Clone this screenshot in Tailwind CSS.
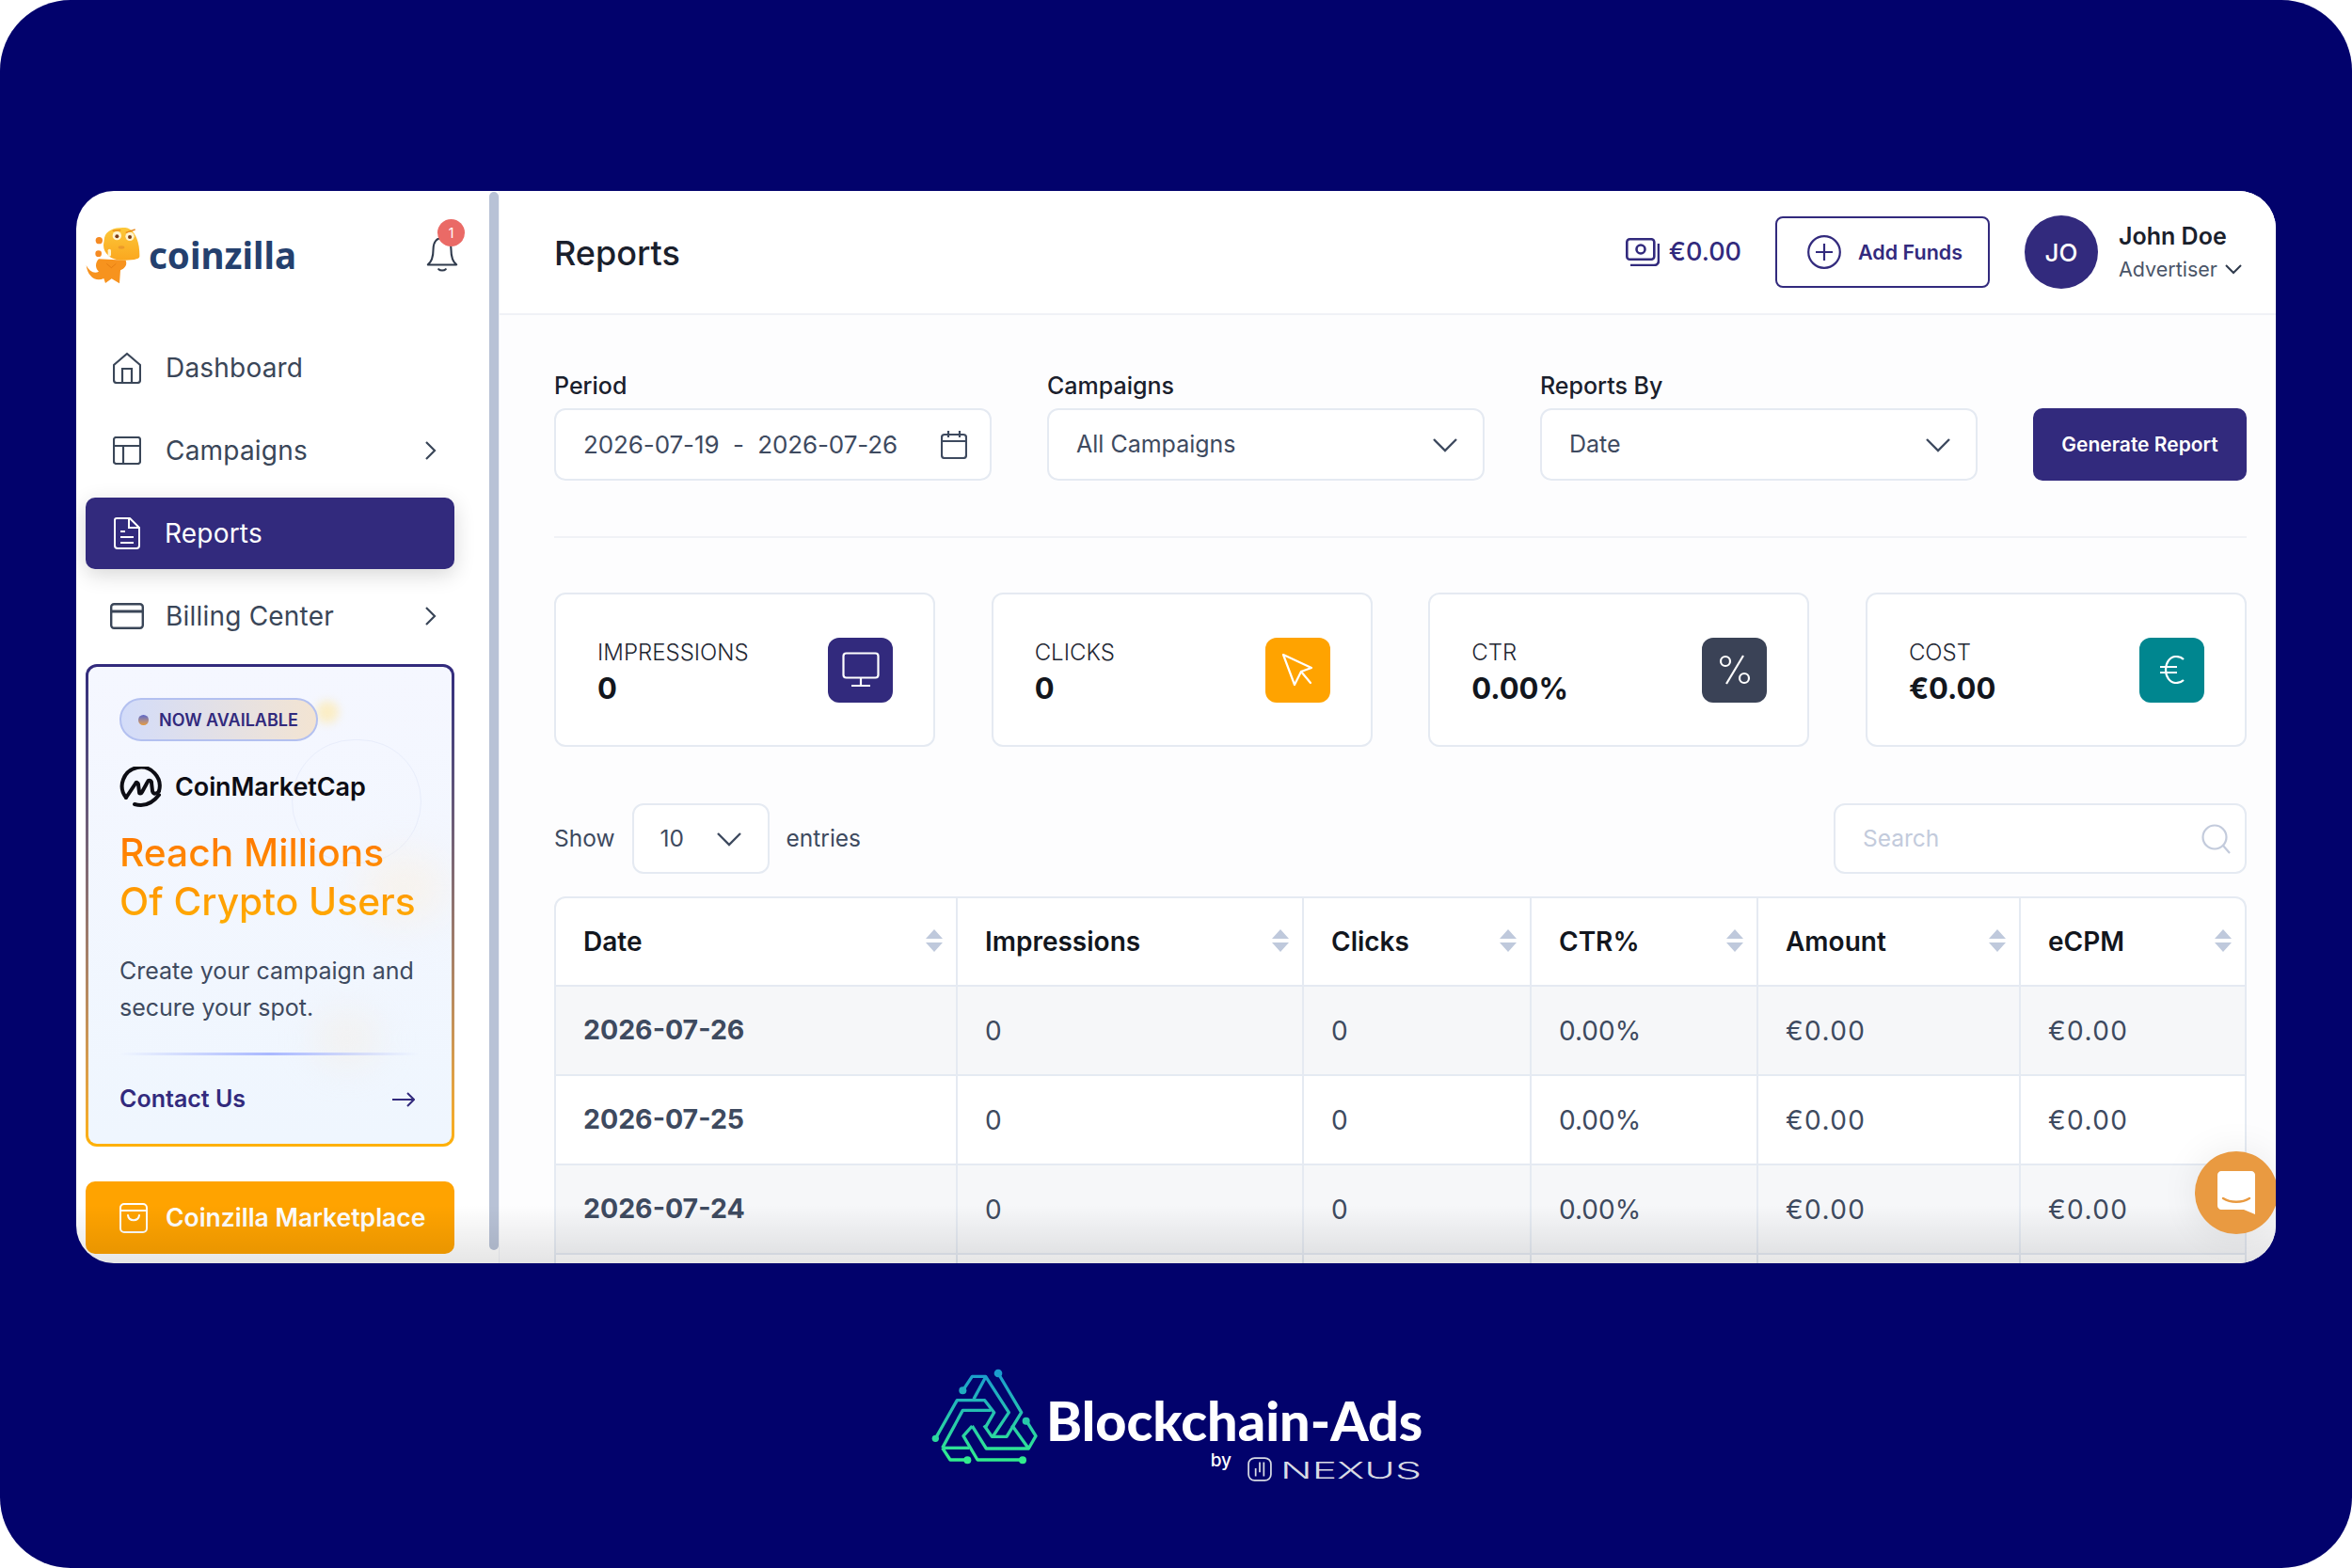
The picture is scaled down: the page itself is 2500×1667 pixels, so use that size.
<!DOCTYPE html>
<html lang="en">
<head>
  <meta charset="UTF-8" />
  <title>Reports</title>
  <script src="https://cdn.jsdelivr.net/npm/@tailwindcss/browser@4"></script>
</head>
<body class="bg-white font-[family-name:Inter,sans-serif]">
<div class="w-[2500px] h-[1667px] rounded-[75px] bg-[#02026c] pt-[203px] overflow-hidden">

  <!-- app window -->
  <div class="relative mx-[81px] w-[2338px] h-[1140px] rounded-[40px] bg-white overflow-hidden flex">

    <!-- sidebar -->
    <aside class="w-[439px] shrink-0 pl-[10px] pt-[37px]">
      <div class="w-[392px] h-[60px] flex items-center relative">
        <svg class="w-[80px] h-[80px] absolute left-[-6px] top-[-8px]" viewBox="0 0 240 240">
          <defs><linearGradient id="head" x1="0" y1="0" x2="0" y2="1"><stop offset="0" stop-color="#fcc83a"/><stop offset="1" stop-color="#fba71f"/></linearGradient></defs>
          <circle cx="61" cy="71" r="11" fill="#f58a22"/><circle cx="59" cy="113" r="10" fill="#f58a22"/>
          <path d="M20 150C24 185 50 205 76 192L81 207L101 193L126 208L129 166C142 160 152 150 146 134L60 130C48 142 48 160 60 170C46 178 30 170 20 150Z" fill="#f7931e"/>
          <path d="M78 62C84 36 115 28 145 30C176 34 191 76 190 122C190 131 165 134 130 134C100 134 74 112 75 85Z" fill="url(#head)"/>
          <circle cx="118" cy="56" r="14" fill="#fff3cf"/><circle cx="159" cy="58" r="14" fill="#fff3cf"/>
          <circle cx="118" cy="58" r="6" fill="#7a3b16"/><circle cx="159" cy="60" r="6" fill="#7a3b16"/>
          <path d="M104 40L130 38M146 46L176 36" stroke="#e8891c" stroke-width="4" fill="none"/>
          <rect x="89" y="98" width="10" height="24" rx="5" fill="#fff3cf"/>
          <ellipse cx="132" cy="93" rx="10" ry="5" fill="#eb9a2a"/>
          <path d="M85 145L100 158L115 145" stroke="#e57d12" stroke-width="3" fill="none"/>
        </svg>
        <span class="ml-[67px] mt-[2px] text-[38.5px] leading-none font-bold text-[#24406e] font-[family-name:'Noto_Sans',sans-serif]">coinzilla</span>
        <svg class="absolute left-[361px] top-[13px] w-[36px] h-[36px]" viewBox="0 8 36 38" fill="none" stroke="#2f3a4c" stroke-width="2.2"><path d="M2 38C7 34 8 29 8 21C8 11 13 8 18 8C23 8 28 11 28 21C28 29 29 34 34 38Z" stroke-linejoin="round"/><path d="M14 43C16 45 20 45 22 43" stroke-linecap="round"/></svg>
        <span class="absolute left-[374px] top-[-7px] w-[29px] h-[29px] rounded-full bg-[#ea6a66] text-white text-[14px] flex items-center justify-center">1</span>
      </div>

      <nav class="mt-[53px] w-[392px] flex flex-col gap-[12px] text-[28px] tracking-[0.2px] text-[#3a4658]">
        <a class="h-[76px] flex items-center pl-[29px] pr-[19px]">
          <svg class="w-[30px] h-[34px]" viewBox="0 0 30 34" fill="none" stroke="#3a4658" stroke-width="2.2"><path d="M1 14L15 2L29 14V30C29 32 28 33 26 33H4C2 33 1 32 1 30Z" stroke-linejoin="round"/><path d="M10 33V18H20V33"/></svg>
          <span class="ml-[26px]">Dashboard</span>
        </a>
        <a class="h-[76px] flex items-center pl-[29px] pr-[19px]">
          <svg class="w-[30px] h-[30px]" viewBox="0 0 30 30" fill="none" stroke="#3a4658" stroke-width="2.2"><rect x="1" y="1" width="28" height="28" rx="2.5"/><path d="M1 10H29M11 10V29"/></svg>
          <span class="ml-[26px]">Campaigns</span>
          <svg class="ml-auto w-[14px] h-[22px]" viewBox="0 0 14 22" fill="none" stroke="#3a4658" stroke-width="2.2"><path d="M3 2L12 11L3 20"/></svg>
        </a>
        <a class="h-[76px] flex items-center pl-[29px] pr-[19px] rounded-[10px] bg-[#322a7d] text-white shadow-[0_6px_22px_rgba(0,0,0,0.16)]">
          <svg class="w-[28px] h-[34px] ml-[1px]" viewBox="0 0 28 34" fill="none" stroke="#fff" stroke-width="2"><path d="M3 1H17L27 11V30C27 32 26 33 24 33H4C2 33 1 32 1 30V3C1 2 2 1 3 1Z" stroke-linejoin="round"/><path d="M16 1V11H27M7 15H12M7 21H21M7 27H21"/></svg>
          <span class="ml-[26px]">Reports</span>
        </a>
        <a class="h-[76px] flex items-center pl-[26px] pr-[19px]">
          <svg class="w-[36px] h-[28px]" viewBox="0 0 36 28" fill="none" stroke="#3a4658" stroke-width="2.4"><rect x="1.2" y="1.2" width="33.6" height="25.6" rx="3"/><path d="M1 9H35" stroke-width="3"/></svg>
          <span class="ml-[23px]">Billing Center</span>
          <svg class="ml-auto w-[14px] h-[22px]" viewBox="0 0 14 22" fill="none" stroke="#3a4658" stroke-width="2.2"><path d="M3 2L12 11L3 20"/></svg>
        </a>
      </nav>

      <!-- promo card -->
      <div class="mt-[13px] w-[392px] h-[513px] rounded-[12px] p-[3px] bg-linear-to-b from-[#322a7d] to-[#ffb100]">
        <div class="relative w-full h-full rounded-[9px] overflow-hidden bg-linear-to-b from-[#f5f7ff] to-[#eff6fe] pl-[33px] pr-[20px] pt-[33px]">
          <span class="absolute left-[216px] top-[77px] w-[138px] h-[132px] rounded-full border border-[#e8edfb]"></span>
          <span class="absolute left-[242px] top-[36px] w-[24px] h-[24px] rounded-full bg-[#fde9ae]/70 blur-[5px]"></span>
          <span class="absolute left-[290px] top-[200px] w-[90px] h-[70px] rounded-full bg-[#fdf0dc]/50 blur-[22px]"></span>
          <span class="absolute left-[240px] top-[365px] w-[70px] h-[60px] rounded-full bg-[#f6ead9]/35 blur-[18px]"></span>

          <div class="relative w-[211px] h-[46px] rounded-full border-2 border-[#b3c0f0] bg-linear-to-r from-[#d3dcf9] to-[#f3e4d2] flex items-center pl-[18px]">
            <span class="w-[11px] h-[11px] rounded-full bg-linear-to-b from-[#5c63c9] to-[#e89a2a]"></span>
            <span class="ml-[11px] text-[18px] font-semibold text-[#322a7d] whitespace-nowrap">NOW AVAILABLE</span>
          </div>

          <div class="relative mt-[27px] flex items-center h-[44px]">
            <svg class="w-[46px] h-[44px]" viewBox="0 0 46 44" fill="none" stroke="#0d0d14" stroke-width="4" stroke-linecap="round" stroke-linejoin="round">
              <path d="M7 33A20 20 0 1 1 42 26"/>
              <path d="M42 30C36 38 27 43 16 40"/>
              <path d="M7 33L17 18C18 16 20 17 20 19L21 27C21 29 23 29 24 27L30 16C31 14 34 15 34 17L35 26C36 30 40 29 42 26"/>
            </svg>
            <span class="ml-[13px] text-[27px] font-semibold text-[#0d0d14] tracking-[-0.1px] whitespace-nowrap">CoinMarketCap</span>
          </div>

          <div class="relative mt-[22px] w-fit text-[40.7px] leading-[52px] font-medium bg-linear-to-b from-[#ff7300] to-[#ffae00] bg-clip-text text-transparent whitespace-nowrap">Reach Millions<br>Of Crypto Users</div>

          <p class="relative mt-[28px] text-[25px] leading-[39px] text-[#3e4a5f] whitespace-nowrap">Create your campaign and<br>secure your spot.</p>

          <div class="relative mt-[28px] w-[318px] h-[3px] bg-linear-to-r from-transparent via-[#a9b8ff] to-transparent"></div>

          <div class="relative mt-[28px] w-[314px] flex items-center justify-between">
            <span class="text-[25px] font-semibold text-[#322a7d]">Contact Us</span>
            <svg class="w-[24px] h-[16px]" viewBox="0 0 24 16" fill="none" stroke="#322a7d" stroke-width="2"><path d="M0 8H23M16 1L23 8L16 15"/></svg>
          </div>
        </div>
      </div>

      <a class="mt-[37px] w-[392px] h-[77px] rounded-[10px] bg-[#ffa300] text-white flex items-center pl-[36px]">
        <svg class="w-[30px] h-[32px]" viewBox="0 0 30 32" fill="none" stroke="#fff" stroke-width="2"><rect x="1" y="1" width="28" height="30" rx="4"/><path d="M1 8H29M9 13C10 20 20 20 21 13" stroke-linecap="round"/></svg>
        <span class="ml-[19px] text-[26.5px] font-semibold whitespace-nowrap">Coinzilla Marketplace</span>
      </a>
    </aside>

    <!-- scrollbar -->
    <div class="w-[10px] h-[1125px] mt-[1px] rounded-full bg-[#b8c2d6] shrink-0"></div>

    <!-- main -->
    <main class="flex-1 min-w-0 bg-[#fdfdfe] border-l border-[#f0f2f6] overflow-hidden">
      <header class="h-[132px] bg-white border-b-2 border-[#f0f2f6] flex items-center pl-[58px] pr-[35px]">
        <h1 class="mt-[2px] text-[36px] font-medium text-[#1a202c]">Reports</h1>
        <div class="ml-auto flex items-center">
          <svg class="w-[36px] h-[30px]" viewBox="0 0 36 30" fill="none" stroke="#322a7d" stroke-width="2.6"><rect x="1.3" y="1.3" width="29" height="21.4" rx="3"/><circle cx="16" cy="12" r="4.5"/><path d="M35 6V24C35 27 33 29 30 29H5"/></svg>
          <span class="ml-[10px] text-[27px] font-medium text-[#322a7d]">€0.00</span>
          <button class="ml-[36px] w-[228px] h-[76px] rounded-[8px] border-2 border-[#322a7d] flex items-center pl-[32px] text-[#322a7d]">
            <svg class="w-[36px] h-[36px]" viewBox="0 0 36 36" fill="none" stroke="#322a7d" stroke-width="2.2"><circle cx="18" cy="18" r="16.8"/><path d="M18 9V27M9 18H27"/></svg>
            <span class="ml-[18px] text-[21.5px] font-semibold whitespace-nowrap">Add Funds</span>
          </button>
          <span class="ml-[37px] w-[78px] h-[78px] rounded-full bg-[#322a7d] text-white text-[26px] font-medium flex items-center justify-center">JO</span>
          <div class="ml-[22px] w-[132px]">
            <div class="text-[25px] leading-[32px] font-semibold text-[#1a202c] whitespace-nowrap">John Doe</div>
            <div class="mt-[4px] flex items-center text-[21.5px] leading-[30px] text-[#4a5568]">Advertiser
              <svg class="ml-[8px] w-[18px] h-[12px]" viewBox="0 0 18 12" fill="none" stroke="#2f3a4c" stroke-width="2"><path d="M1 2L9 10L17 2"/></svg>
            </div>
          </div>
        </div>
      </header>

      <div class="pl-[58px] pr-[31px] pt-[60px]">
        <!-- filters -->
        <div class="flex items-end gap-[59px] pb-[59px] border-b-2 border-[#f0f2f6]">
          <div class="w-[465px]">
            <label class="block text-[25px] leading-[30px] font-medium text-[#1a202c] mb-[9px]">Period</label>
            <div class="h-[77px] rounded-[12px] border-2 border-[#e5eaf2] bg-white flex items-center pl-[29px] pr-[24px] text-[26px] text-[#3e4a5f]">
              <span class="whitespace-nowrap tracking-[-0.1px]">2026-07-19 &nbsp;-&nbsp; 2026-07-26</span>
              <svg class="ml-auto w-[28px] h-[30px]" viewBox="0 0 28 30" fill="none" stroke="#3e4a5f" stroke-width="2.2"><rect x="1" y="4" width="26" height="25" rx="3"/><path d="M1 11H27M8 0V7M20 0V7"/></svg>
            </div>
          </div>
          <div class="w-[465px]">
            <label class="block text-[25px] leading-[30px] font-medium text-[#1a202c] mb-[9px]">Campaigns</label>
            <div class="h-[77px] rounded-[12px] border-2 border-[#e5eaf2] bg-white flex items-center pl-[29px] pr-[27px] text-[25px] text-[#3e4a5f]">
              All Campaigns
              <svg class="ml-auto w-[26px] h-[16px]" viewBox="0 0 26 16" fill="none" stroke="#3e4a5f" stroke-width="2.4"><path d="M1 2L13 14L25 2"/></svg>
            </div>
          </div>
          <div class="w-[465px]">
            <label class="block text-[25px] leading-[30px] font-medium text-[#1a202c] mb-[9px]">Reports By</label>
            <div class="h-[77px] rounded-[12px] border-2 border-[#e5eaf2] bg-white flex items-center pl-[29px] pr-[27px] text-[25px] text-[#3e4a5f]">
              Date
              <svg class="ml-auto w-[26px] h-[16px]" viewBox="0 0 26 16" fill="none" stroke="#3e4a5f" stroke-width="2.4"><path d="M1 2L13 14L25 2"/></svg>
            </div>
          </div>
          <button class="w-[227px] h-[77px] rounded-[10px] bg-[#322a7d] text-white text-[21px] font-semibold whitespace-nowrap">Generate Report</button>
        </div>

        <!-- stat cards -->
        <div class="mt-[58px] grid grid-cols-4 gap-[59.5px]">
          <div class="h-[164px] rounded-[12px] border-2 border-[#e5eaf2] bg-white flex items-center justify-between pl-[44px] pr-[43px]">
            <div class="pt-[6px]"><div class="text-[24px] leading-[32px] font-light text-[#1f2733]">IMPRESSIONS</div><div class="mt-[1px] text-[31px] leading-[42px] font-bold text-[#12161d]">0</div></div>
            <span class="w-[69px] h-[69px] rounded-[12px] bg-[#322a7d] flex items-center justify-center">
              <svg class="w-[40px] h-[38px]" viewBox="0 0 40 38" fill="none" stroke="#fff" stroke-width="2.2"><rect x="1.5" y="1.5" width="37" height="26" rx="3"/><path d="M20 28V36M10 36H30"/></svg>
            </span>
          </div>
          <div class="h-[164px] rounded-[12px] border-2 border-[#e5eaf2] bg-white flex items-center justify-between pl-[44px] pr-[43px]">
            <div class="pt-[6px]"><div class="text-[24px] leading-[32px] font-light text-[#1f2733]">CLICKS</div><div class="mt-[1px] text-[31px] leading-[42px] font-bold text-[#12161d]">0</div></div>
            <span class="w-[69px] h-[69px] rounded-[12px] bg-[#ffa300] flex items-center justify-center">
              <svg class="w-[34px] h-[36px]" viewBox="0 0 34 36" fill="none" stroke="#fff" stroke-width="2.2" stroke-linejoin="round"><path d="M2 2L32 16L21 20L14 34Z"/><path d="M21 20L31 32" stroke-linecap="round"/></svg>
            </span>
          </div>
          <div class="h-[164px] rounded-[12px] border-2 border-[#e5eaf2] bg-white flex items-center justify-between pl-[44px] pr-[43px]">
            <div class="pt-[6px]"><div class="text-[24px] leading-[32px] font-light text-[#1f2733]">CTR</div><div class="mt-[1px] text-[31px] leading-[42px] font-bold text-[#12161d]">0.00%</div></div>
            <span class="w-[69px] h-[69px] rounded-[12px] bg-[#3a4256] flex items-center justify-center">
              <svg class="w-[34px] h-[32px]" viewBox="0 0 34 32" fill="none" stroke="#fff" stroke-width="2.2"><circle cx="7" cy="7" r="5"/><circle cx="27" cy="25" r="5"/><path d="M26 1L8 31"/></svg>
            </span>
          </div>
          <div class="h-[164px] rounded-[12px] border-2 border-[#e5eaf2] bg-white flex items-center justify-between pl-[44px] pr-[43px]">
            <div class="pt-[6px]"><div class="text-[24px] leading-[32px] font-light text-[#1f2733]">COST</div><div class="mt-[1px] text-[31px] leading-[42px] font-bold text-[#12161d]">€0.00</div></div>
            <span class="w-[69px] h-[69px] rounded-[12px] bg-[#00868f] flex items-center justify-center">
              <svg class="w-[28px] h-[30px]" viewBox="0 0 28 30" fill="none" stroke="#fff" stroke-width="2.2"><path d="M26 4C23 1 20 1 18 1C11 1 7 8 7 15C7 22 11 29 18 29C20 29 23 29 26 26M1 12H19M1 18H19"/></svg>
            </span>
          </div>
        </div>

        <!-- table controls -->
        <div class="mt-[60px] flex items-center text-[24.5px] text-[#3e4a5f]">
          <span>Show</span>
          <div class="ml-[18px] w-[146px] h-[75px] rounded-[12px] border-2 border-[#e5eaf2] bg-white flex items-center pl-[28px] pr-[28px]">
            10
            <svg class="ml-auto w-[26px] h-[16px]" viewBox="0 0 26 16" fill="none" stroke="#3e4a5f" stroke-width="2.4"><path d="M1 2L13 14L25 2"/></svg>
          </div>
          <span class="ml-[18px]">entries</span>
          <div class="ml-auto w-[439px] h-[75px] rounded-[12px] border-2 border-[#e5eaf2] bg-white flex items-center pl-[29px] pr-[14px] text-[#c3cbdc]">
            Search
            <svg class="ml-auto w-[32px] h-[32px]" viewBox="0 0 32 32" fill="none" stroke="#c3cbdc" stroke-width="2.2"><circle cx="14" cy="14" r="12.5"/><path d="M23 23L30 31"/></svg>
          </div>
        </div>

        <!-- table -->
        <table class="mt-[24px] w-[1799px] table-fixed border-separate border-spacing-0 text-[28px] text-[#3e4a5f]">
          <colgroup>
            <col class="w-[429px]"><col class="w-[368px]"><col class="w-[242px]"><col class="w-[241px]"><col class="w-[279px]"><col class="w-[240px]">
          </colgroup>
          <thead>
            <tr class="h-[96px] bg-white text-left text-[#12161d]">
              <th class="relative pl-[29px] font-semibold border-2 border-[#e5eaf2] rounded-tl-[12px]">Date<svg class="absolute right-[14px] top-[33px] w-[18px] h-[24px]" viewBox="0 0 18 24" fill="#bfc9dc"><path d="M9 0L18 10H0ZM0 14H18L9 24Z"/></svg></th>
              <th class="relative pl-[29px] font-semibold border-y-2 border-r-2 border-[#e5eaf2]">Impressions<svg class="absolute right-[14px] top-[33px] w-[18px] h-[24px]" viewBox="0 0 18 24" fill="#bfc9dc"><path d="M9 0L18 10H0ZM0 14H18L9 24Z"/></svg></th>
              <th class="relative pl-[29px] font-semibold border-y-2 border-r-2 border-[#e5eaf2]">Clicks<svg class="absolute right-[14px] top-[33px] w-[18px] h-[24px]" viewBox="0 0 18 24" fill="#bfc9dc"><path d="M9 0L18 10H0ZM0 14H18L9 24Z"/></svg></th>
              <th class="relative pl-[29px] font-semibold border-y-2 border-r-2 border-[#e5eaf2]">CTR%<svg class="absolute right-[14px] top-[33px] w-[18px] h-[24px]" viewBox="0 0 18 24" fill="#bfc9dc"><path d="M9 0L18 10H0ZM0 14H18L9 24Z"/></svg></th>
              <th class="relative pl-[29px] font-semibold border-y-2 border-r-2 border-[#e5eaf2]">Amount<svg class="absolute right-[14px] top-[33px] w-[18px] h-[24px]" viewBox="0 0 18 24" fill="#bfc9dc"><path d="M9 0L18 10H0ZM0 14H18L9 24Z"/></svg></th>
              <th class="relative pl-[29px] font-semibold border-y-2 border-r-2 border-[#e5eaf2] rounded-tr-[12px]">eCPM<svg class="absolute right-[14px] top-[33px] w-[18px] h-[24px]" viewBox="0 0 18 24" fill="#bfc9dc"><path d="M9 0L18 10H0ZM0 14H18L9 24Z"/></svg></th>
            </tr>
          </thead>
          <tbody class="[&_td]:pl-[29px] [&_td]:border-r-2 [&_td]:border-b-2 [&_td]:border-[#e5eaf2] [&_td:first-child]:border-l-2 [&_td:first-child]:font-bold [&_td:first-child]:text-[28.5px] [&_td:nth-child(n+5)]:tracking-[1.4px]">
            <tr class="h-[95px] bg-[#f6f7f9]"><td>2026-07-26</td><td>0</td><td>0</td><td>0.00%</td><td>€0.00</td><td>€0.00</td></tr>
            <tr class="h-[95px] bg-white"><td>2026-07-25</td><td>0</td><td>0</td><td>0.00%</td><td>€0.00</td><td>€0.00</td></tr>
            <tr class="h-[95px] bg-[#f6f7f9]"><td>2026-07-24</td><td>0</td><td>0</td><td>0.00%</td><td>€0.00</td><td>€0.00</td></tr>
            <tr class="h-[95px] bg-white"><td></td><td></td><td></td><td></td><td></td><td></td></tr>
          </tbody>
        </table>
      </div>
    </main>

    <!-- bottom fade over the window -->
    <div class="absolute inset-x-0 bottom-0 h-[62px] bg-linear-to-b from-transparent to-black/10 pointer-events-none"></div>

    <!-- chat bubble -->
    <div class="absolute left-[2252px] top-[1021px] w-[88px] h-[88px] rounded-full bg-[#e99a41] shadow-[0_0_40px_rgba(0,0,0,0.08)] flex items-center justify-center">
      <svg class="w-[40px] h-[46px]" viewBox="0 0 40 46"><path d="M4 0H36C38 0 40 2 40 4V46L28 41H4C2 41 0 39 0 37V4C0 2 2 0 4 0Z" fill="#fff"/><path d="M6 29C14 34 26 34 34 29" fill="none" stroke="#e99a41" stroke-width="2.4" stroke-linecap="round"/></svg>
    </div>
  </div>

  <!-- Blockchain-Ads logo -->
  <div class="mx-auto mt-[107px] w-[530px] h-[130px] flex">
    <svg class="w-[125px] h-[115px] shrink-0" viewBox="0 0 375 345" fill="none" stroke="url(#ba)" stroke-width="10" stroke-linejoin="round">
      <defs><linearGradient id="ba" gradientUnits="userSpaceOnUse" x1="0" y1="20" x2="0" y2="315"><stop offset="0" stop-color="#1a9ad0"/><stop offset="1" stop-color="#32ee8c"/></linearGradient></defs>
      <path d="M115 85L145 40H188L262 155L212 230"/>
      <path d="M150 112L188 42"/>
      <path d="M228 30L302 155L255 232H208L183 196"/>
      <path d="M28 238L97 116H185L215 155L186 205"/>
      <path d="M50 268L115 148H205"/>
      <path d="M50 268H135"/>
      <path d="M50 268L75 306H130"/>
      <path d="M145 198L117 230L162 306H305"/>
      <path d="M145 198L190 270H325L348 230L318 182"/>
      <path d="M272 196L325 270"/>
      <g fill="url(#ba)" stroke="none"><circle cx="115" cy="85" r="12"/><circle cx="228" cy="30" r="13"/><circle cx="28" cy="238" r="11"/><circle cx="130" cy="307" r="12"/><circle cx="306" cy="307" r="12"/><circle cx="317" cy="182" r="12"/></g>
    </svg>
    <div class="ml-[2px] w-[403px] text-white">
      <div class="pt-[28px] text-[57.5px] leading-[64px] font-black whitespace-nowrap font-[family-name:Lato,sans-serif]">Blockchain-Ads</div>
      <div class="mt-[2px] flex items-center justify-end h-[36px] pr-[4px]">
        <span class="mb-[20px] text-[19px] font-medium leading-none">by</span>
        <svg class="ml-[17px] w-[26px] h-[26px]" viewBox="0 0 24 24" fill="none" stroke="#d8dbe4" stroke-width="1.6"><rect x="1" y="1" width="22" height="22" rx="6"/><path d="M8 19V11M12 15V5M16 5V19"/></svg>
        <svg class="ml-[9px] mt-[2px] w-[150px] h-[30px]" viewBox="0 0 150 30"><text x="0" y="24" font-size="24" font-weight="300" fill="#d8dbe4" textLength="150" lengthAdjust="spacingAndGlyphs">NEXUS</text></svg>
      </div>
    </div>
  </div>
</div>
</body>
</html>
